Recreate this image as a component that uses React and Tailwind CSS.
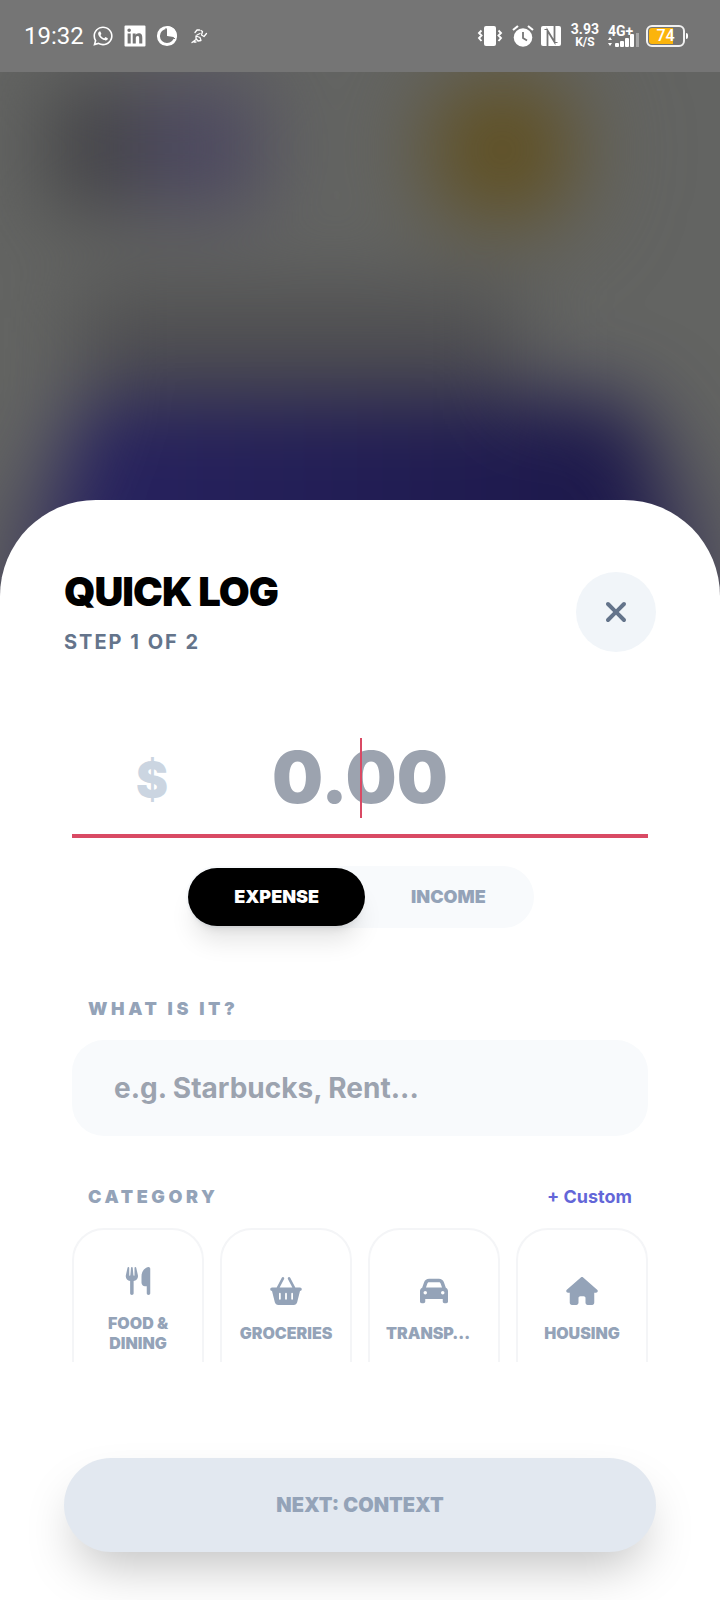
import React, { useState } from "react";
import { FaUtensils, FaBasketShopping, FaCar, FaHouse, FaXmark, FaWhatsapp } from "react-icons/fa6";

const categories = [
    { id: "food", label: "FOOD & DINING", icon: FaUtensils, align: "text-center" },
    { id: "groceries", label: "GROCERIES", icon: FaBasketShopping, align: "text-center" },
    { id: "transport", label: "TRANSP…", icon: FaCar, align: "text-left" },
    { id: "housing", label: "HOUSING", icon: FaHouse, align: "text-center" },
];

const StatusBar = () => (
    <header className="relative flex h-[72px] shrink-0 items-center justify-between bg-[#757575] pl-6 pr-8 font-[Roboto,sans-serif] text-white">
        <div className="flex items-center gap-[10px]">
            <span className="text-2xl">19:32</span>
            <FaWhatsapp className="-ml-[2px] size-[22px]" />
            {/* LinkedIn */}
            <svg viewBox="0 0 22 22" className="size-[22px]" fill="currentColor">
                <path
                    fillRule="evenodd"
                    d="M1.500 .5h19a1 1 0 0 1 1 1v19a1 1 0 0 1-1 1h-19a1 1 0 0 1-1-1v-19a1 1 0 0 1 1-1zM3.600 8.500v9.900h3.100V8.500zM5.150 3.500a1.800 1.800 0 1 0 0 3.600 1.800 1.800 0 0 0 0-3.600zM8.700 8.500v9.900h3.100v-4.900c0-1.300.3-2.500 1.850-2.500s1.550 1.400 1.550 2.600v4.800h3.100v-5.400c0-2.700-.6-4.700-3.700-4.700-1.500 0-2.500.8-2.900 1.600h-.05V8.500z"
                />
            </svg>
            {/* Data usage */}
            <svg viewBox="0 0 22 22" className="size-[22px]">
                <circle cx="11" cy="11" r="8.600" fill="none" stroke="currentColor" strokeWidth="3" />
                <path d="M11 11V1a10 10 0 0 1 9.800 11.500z" fill="currentColor" />
                <path d="M10 3v9l9 1.600" fill="none" stroke="#757575" strokeWidth="1" />
            </svg>
            <svg viewBox="0 0 22 22" className="size-[22px]" fill="none" stroke="currentColor" strokeWidth="1.300" strokeLinecap="round" strokeLinejoin="round">
                <path d="M7 7.500l2-2.500 2.500 0M13 5.500l1.500 1-1 3.500 2.500 1.500 2.500-3M9 10l3-1.500M4 17.500l4-3M8 11l4 1.500 1 3-3 .5-2-2.500zM6 17l2 0" />
            </svg>
        </div>

        <div className="flex items-center gap-[6px]">
            {/* Vibrate */}
            <svg viewBox="0 0 26 22" className="h-[22px] w-[26px]">
                <rect x="7" y="1" width="12" height="20" rx="2" fill="currentColor" />
                <path d="M4.500 5.500L2 8l2.500 2.500L2 13l2.500 3M21.500 5.500L24 8l-2.500 2.500L24 13l-2.500 3" fill="none" stroke="currentColor" strokeWidth="1.900" />
            </svg>
            {/* Alarm */}
            <svg viewBox="0 0 22 22" className="ml-[3px] size-[22px]">
                <circle cx="11" cy="12.500" r="9.300" fill="currentColor" />
                <path d="M1 5l5-4M21 5l-5-4" stroke="currentColor" strokeWidth="2.200" />
                <path d="M11 7v6l4 2.500" fill="none" stroke="#757575" strokeWidth="1.800" />
            </svg>
            {/* NFC */}
            <svg viewBox="0 0 22 22" className="size-[22px]">
                <rect x="1" y="1" width="20" height="20" rx="2" fill="currentColor" />
                <path d="M7.500 21V5.500l7 11.500V1" fill="none" stroke="#757575" strokeWidth="1.800" />
                <path d="M4.500 4.500h3M14.500 17.500h3" stroke="#757575" strokeWidth="1.200" />
            </svg>
            <div className="ml-[3px] flex flex-col items-center text-xs font-bold leading-[13px]">
                <span className="text-sm leading-[13px]">3.93</span>
                <span>K/S</span>
            </div>
            <div className="ml-[3px] flex flex-col">
                <span className="text-sm font-bold leading-[11px]">4G+</span>
                <svg viewBox="0 0 32 14" className="-mt-1 h-[14px] w-8" fill="currentColor">
                    <path d="M0 7l2-3 2 3zM0 10l2 3 2-3z" />
                    <rect x="7" y="10" width="4" height="4" rx="1" />
                    <rect x="12" y="8" width="4" height="6" rx="1" />
                    <rect x="17" y="5" width="4" height="9" rx="1" />
                    <rect x="22" y="1" width="4" height="13" rx="1" />
                    <rect x="28" y="-5" width="3" height="19" opacity=".35" />
                </svg>
            </div>
            <div className="flex items-center gap-px">
                <div className="relative flex h-[22px] w-[39px] items-center justify-center rounded-md border-2 border-white/90 text-base font-medium">
                    <span className="absolute inset-y-px left-px w-[24px] rounded-l-[3px] bg-[#fbb40b]" />
                    <span className="relative">74</span>
                </div>
                <span className="h-[6px] w-[2px] rounded-r bg-white" />
            </div>
        </div>
    </header>
);

// Dashboard left behind the sheet, dimmed and out of focus
const Backdrop = () => (
    <div aria-hidden="true" className="absolute inset-0 overflow-hidden bg-[#636462]">
        <div className="flex h-full flex-col blur-2xl">
            <div className="flex pl-[50px] pt-[86px]">
                <div className="h-[124px] w-[86px] bg-[#434346]" />
                <div className="h-[124px] w-[124px] bg-[#4c4860]" />
                <div className="ml-[178px] size-[128px] rounded-[40px] bg-[#605022] shadow-[0_0_40px_20px_#64604f]" />
            </div>
            <div className="ml-[80px] mr-[200px] mt-[76px] h-[108px] bg-[#4f4f51]" />
            <div className="mx-[64px] h-[480px] rounded-[60px] bg-linear-to-r from-[#282360] to-[#1c1849] shadow-[0_110px_40px_50px_#3f3b5c]" />
        </div>
    </div>
);

export default function App() {
    const [type, setType] = useState("expense");
    const [amount, setAmount] = useState("");
    const [name, setName] = useState("");

    return (
        <div className="relative flex h-screen flex-col font-[Inter,sans-serif]">
            <Backdrop />
            <StatusBar />

            <main className="relative mt-[428px] flex min-h-0 flex-1 flex-col rounded-t-[96px] bg-white px-16 pb-12 pt-[72px]">
                <div className="flex items-start justify-between">
                    <div>
                        <h1 className="text-[40px] font-black leading-10 tracking-tight text-black">QUICK LOG</h1>
                        <p className="mt-4 text-xl font-bold leading-7 tracking-widest text-[#64748b]">STEP 1 OF 2</p>
                    </div>
                    <button aria-label="Close" className="flex size-20 items-center justify-center rounded-full bg-slate-100 text-[#64748b]">
                        <FaXmark className="size-8" />
                    </button>
                </div>

                <div className="mt-[82px] min-h-0 flex-1 overflow-y-auto px-2 [scrollbar-width:none]">
                    {/* Amount */}
                    <div className="relative border-b-4 border-[#d94a64] pb-4">
                        <span className="absolute left-16 top-0 text-5xl font-black leading-[84px] text-[#cbd5e1]">$</span>
                        <input
                            type="text"
                            inputMode="decimal"
                            aria-label="Amount"
                            placeholder="0.00"
                            value={amount}
                            onChange={(e) => setAmount(e.target.value)}
                            className="block h-20 w-full bg-transparent pb-1 text-center text-7xl font-black text-black outline-none placeholder:text-[#9ca3af]"
                        />
                        {!amount && <span className="absolute left-1/2 top-0 h-20 w-[2px] bg-[#d94a64]" />}
                    </div>

                    {/* Expense / Income */}
                    <div className="mt-7 flex justify-center">
                        <div className="flex rounded-full bg-slate-50 p-[2px]">
                            <button
                                onClick={() => setType("expense")}
                                className={`h-[58px] rounded-full px-[46px] text-lg font-black ${type === "expense" ? "bg-black text-white shadow-xl" : "text-[#94a3b8]"}`}
                            >
                                EXPENSE
                            </button>
                            <button
                                onClick={() => setType("income")}
                                className={`h-[58px] rounded-full px-[46px] text-lg font-black ${type === "income" ? "bg-black text-white shadow-xl" : "text-[#94a3b8]"}`}
                            >
                                INCOME
                            </button>
                        </div>
                    </div>

                    {/* Description */}
                    <label htmlFor="name" className="ml-4 mt-[66px] block text-lg font-black leading-[30px] tracking-[0.2em] text-[#94a3b8]">
                        WHAT IS IT?
                    </label>
                    <input
                        id="name"
                        type="text"
                        placeholder="e.g. Starbucks, Rent..."
                        value={name}
                        onChange={(e) => setName(e.target.value)}
                        className="mt-4 block h-24 w-full rounded-[32px] bg-slate-50 px-[42px] text-[28px] font-bold text-black outline-none placeholder:text-[#9ca3af]"
                    />

                    {/* Category */}
                    <div className="mt-[46px] flex items-center justify-between px-4">
                        <h2 className="text-lg font-black leading-[30px] tracking-[0.2em] text-[#94a3b8]">CATEGORY</h2>
                        <button className="text-lg font-bold leading-[30px] text-[#6366d8]">+ Custom</button>
                    </div>
                    <div className="mt-4 grid grid-cols-4 gap-4">
                        {categories.map(({ id, label, icon: Icon, align }) => (
                            <button
                                key={id}
                                className="flex h-[164px] flex-col items-center justify-center gap-[18px] rounded-[32px] border-2 border-[#f4f5f7] px-4 text-[#94a3b8]"
                            >
                                <Icon className="h-7 w-8" />
                                <span className={`w-full text-base font-black leading-5 ${align}`}>{label}</span>
                            </button>
                        ))}
                    </div>
                </div>

                <button className="mt-24 h-[94px] shrink-0 rounded-full bg-slate-200 text-xl font-black text-[#94a3b8] shadow-2xl">
                    NEXT: CONTEXT
                </button>
            </main>
        </div>
    );
}
